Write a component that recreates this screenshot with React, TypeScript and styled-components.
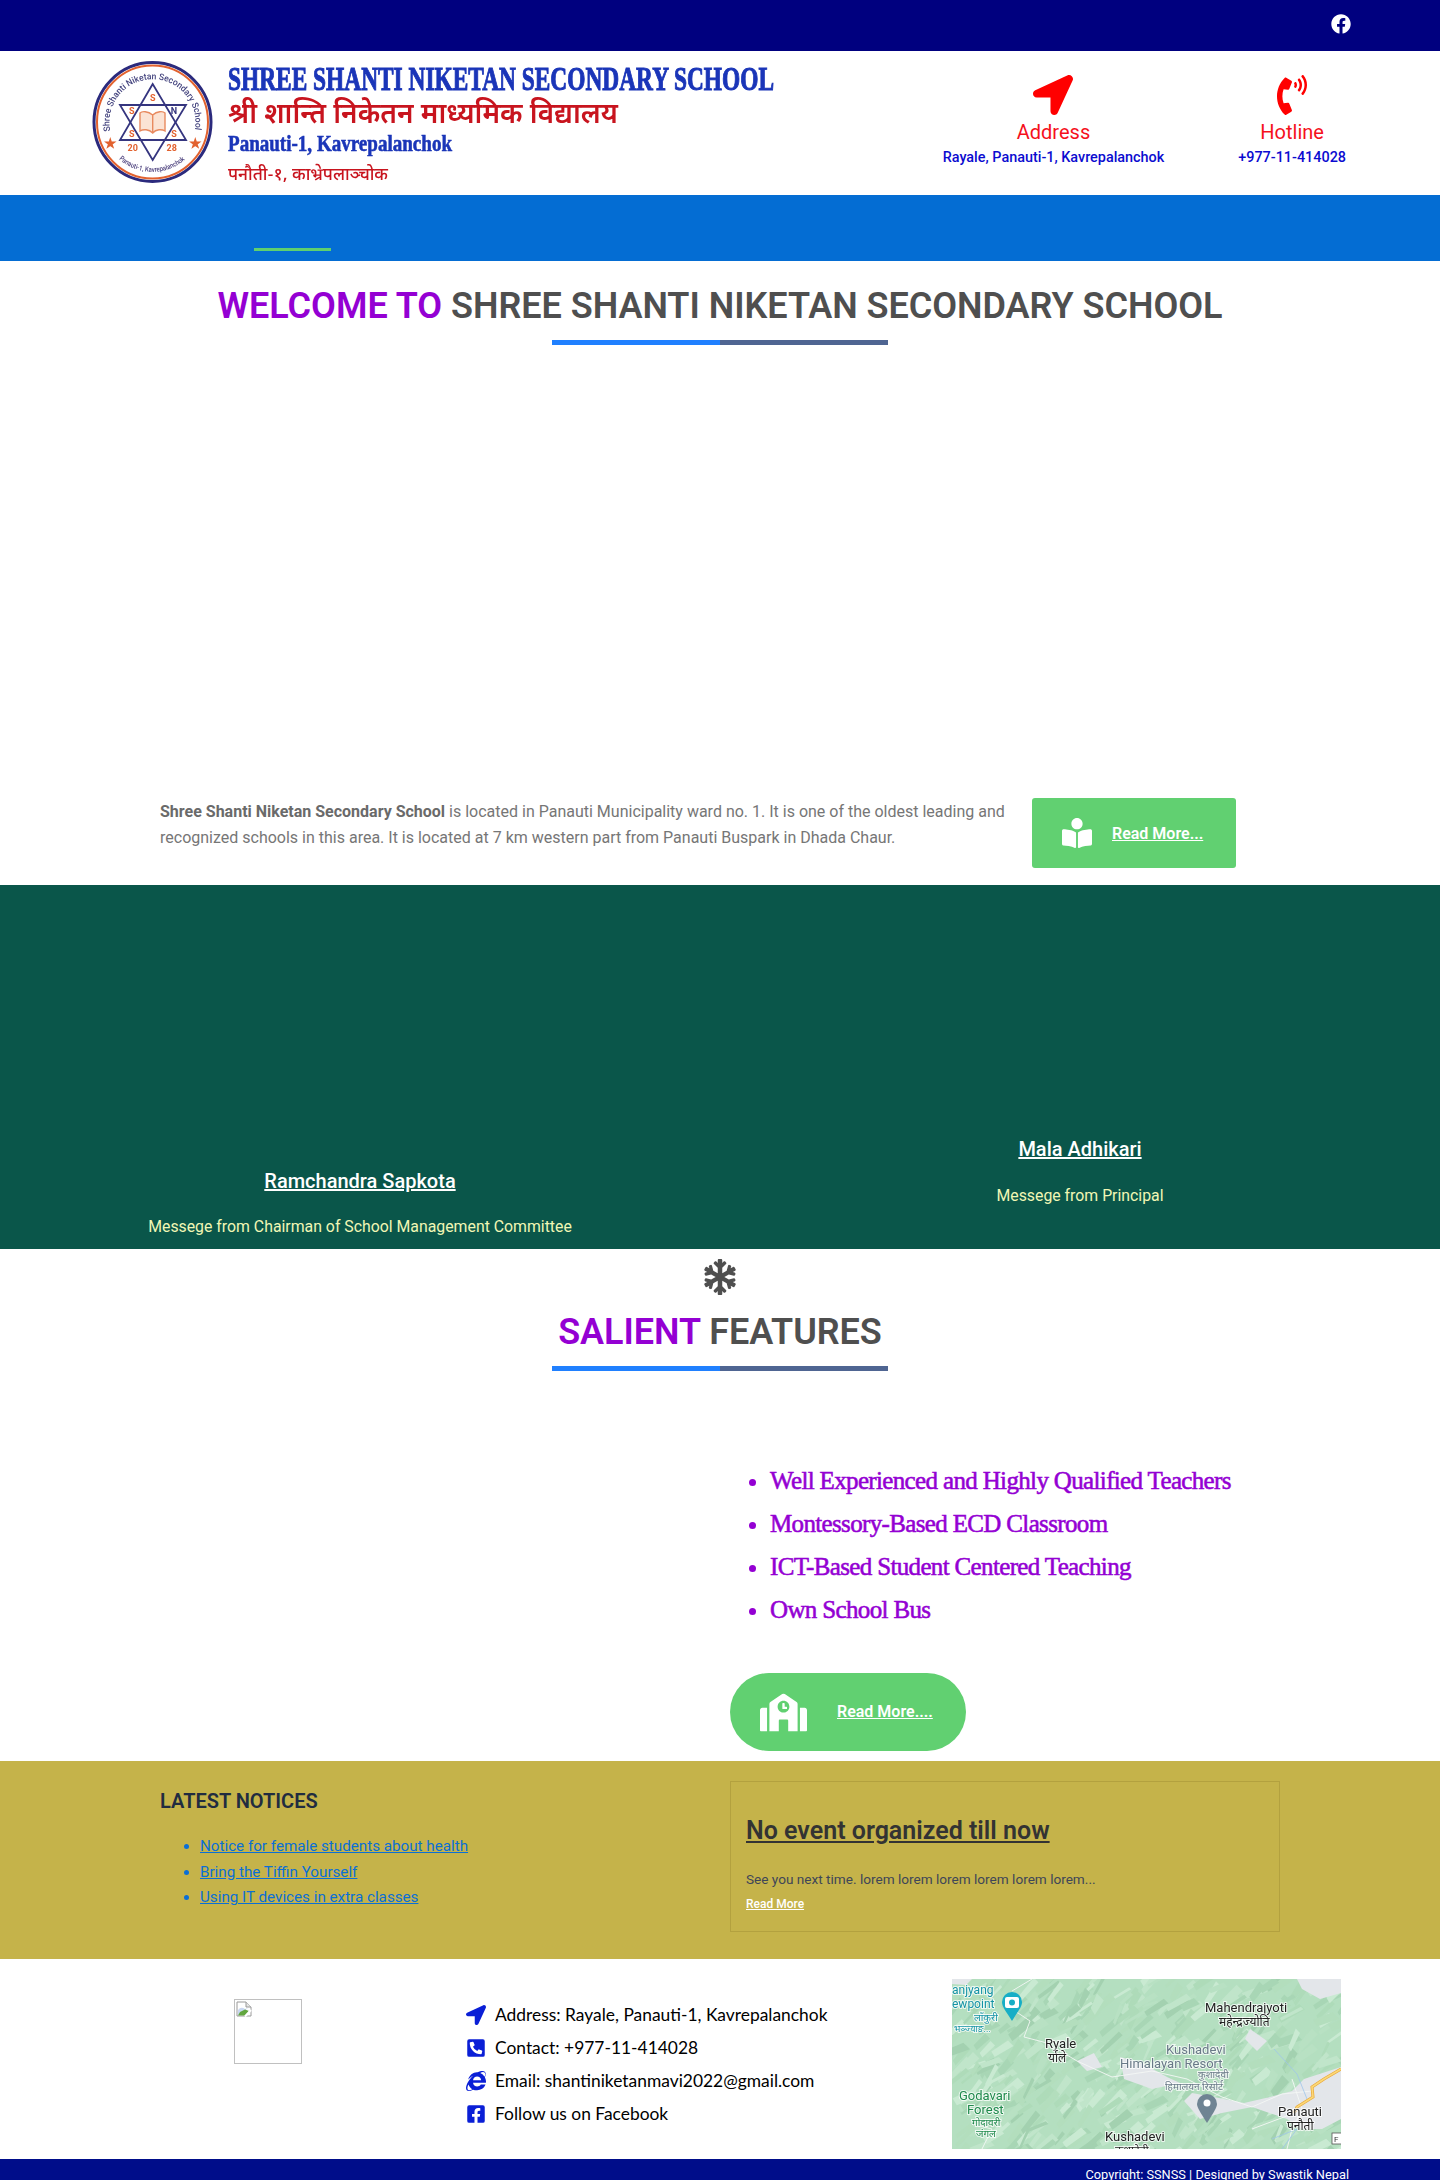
import React from "react";
import styled, { createGlobalStyle } from "styled-components";
import {
  FaBookReader,
  FaFacebook,
  FaFacebookSquare,
  FaInternetExplorer,
  FaLocationArrow,
  FaPhoneSquareAlt,
  FaPhoneVolume,
  FaSchool,
  FaSnowflake,
} from "react-icons/fa";

const GlobalStyle = createGlobalStyle`
  html, body {
    margin: 0;
    padding: 0;
    background: #fff;
  }
  body {
    font-family: Roboto, "Liberation Sans", sans-serif;
    font-size: 16px;
  }
  * {
    box-sizing: border-box;
  }
`;

const LOGO_SERIF = '"Liberation Serif", "Noto Sans CJK SC", serif';
const DEVANAGARI = '"Noto Sans Devanagari", "Noto Sans", "Liberation Serif", serif';

const Logo = () => (
  <LogoSvg viewBox="0 0 700 144" width="700" height="144">
    <defs>
      <path id="logoTopArc" d="M 30.4 80 A 43 43 0 1 1 114.6 80" />
      <path id="logoBottomArc" d="M 39 108 A 50 50 0 0 0 106 108" />
    </defs>
    <ellipse cx="72.5" cy="71" rx="58.5" ry="59.5" fill="#fff" stroke="#2b2a7d" strokeWidth="3" />
    <ellipse cx="72.5" cy="71" rx="55.5" ry="56.5" fill="none" stroke="#e2622f" strokeWidth="2" />
    <text fontFamily="Roboto, sans-serif" fontSize="9" fontWeight="500" fill="#45457f">
      <textPath href="#logoTopArc" textLength="151" lengthAdjust="spacingAndGlyphs">
        Shree Shanti Niketan Secondary School
      </textPath>
    </text>
    <text fontFamily="Roboto, sans-serif" fontSize="7" fontWeight="500" fill="#4a3f7c">
      <textPath href="#logoBottomArc" textLength="72" lengthAdjust="spacingAndGlyphs">
        Panauti-1, Kavrepalanchok
      </textPath>
    </text>
    <polygon points="72.7,33 40,89 106,89" fill="none" stroke="#35357f" strokeWidth="1.8" />
    <polygon points="72.7,109 40,54 106,54" fill="none" stroke="#35357f" strokeWidth="1.8" />
    <g fontFamily="Roboto, sans-serif" fontSize="9" fontWeight="700" fill="#e2622f" textAnchor="middle">
      <text x="72.7" y="50">S</text>
      <text x="51.7" y="63">S</text>
      <text x="94" y="63" fill="#35357f">N</text>
      <text x="51.7" y="86">S</text>
      <text x="94" y="86">S</text>
      <text x="52.7" y="100">20</text>
      <text x="91.7" y="100">28</text>
      <text x="30.7" y="97" fontSize="14">★</text>
      <text x="115.7" y="97" fontSize="14">★</text>
    </g>
    <path
      d="M 72.7 64 C 68 60 62 60 60 62 L 60 80 C 63 78 69 78 72.7 82 C 76 78 82 78 85 80 L 85 62 C 83 60 77 60 72.7 64 Z M 72.7 64 L 72.7 82"
      fill="#fbe3d4"
      stroke="#e88a5f"
      strokeWidth="1.4"
    />
    <text x="148" y="39" fontFamily={LOGO_SERIF} fontSize="33" fontWeight="700" fill="#1a35b8" stroke="#1a35b8" strokeWidth="1" textLength="546" lengthAdjust="spacingAndGlyphs">
      SHREE SHANTI NIKETAN SECONDARY SCHOOL
    </text>
    <text x="148" y="72" fontFamily={DEVANAGARI} fontSize="29" fontWeight="600" fill="#c8141e" textLength="390" lengthAdjust="spacingAndGlyphs">
      श्री शान्ति निकेतन माध्यमिक विद्यालय
    </text>
    <text x="148" y="100" fontFamily={LOGO_SERIF} fontSize="24" fontWeight="700" fill="#1a35b8" stroke="#1a35b8" strokeWidth="0.6" textLength="224" lengthAdjust="spacingAndGlyphs">
      Panauti-1, Kavrepalanchok
    </text>
    <text x="148" y="129" fontFamily={DEVANAGARI} fontSize="17" fontWeight="500" fill="#c8141e" textLength="160" lengthAdjust="spacingAndGlyphs">
      पनौती-१, काभ्रेपलाञ्चोक
    </text>
  </LogoSvg>
);

// cheap seeded random so the map texture stays the same on each render
const seeded = (start: number) => {
  let s = start;
  return () => {
    s = (s * 16807) % 2147483647;
    return s / 2147483647;
  };
};

const ridgeColours = ["#aedbb9", "#b8e1c3", "#a8d6b5", "#c0e5ca", "#a3d1b0", "#b3debd", "#c9ead2"];

// thin slanted slivers, running low-left to up-right like the terrain shading
const ridges = (() => {
  const rnd = seeded(4242);
  const out: { points: string; fill: string }[] = [];
  for (let i = 0; i < 520; i++) {
    const x = rnd() * 400 - 10;
    const y = rnd() * 180;
    const w = 6 + rnd() * 16;
    const h = 6 + rnd() * 14;
    const t = 2 + rnd() * 5;
    out.push({
      points: `${x},${y} ${x + w},${y - h} ${x + w + t},${y - h + t} ${x + t * 0.6},${y + t}`,
      fill: ridgeColours[Math.floor(rnd() * ridgeColours.length)],
    });
  }
  return out;
})();

const MapPicture = () => (
  <MapSvg viewBox="0 0 389 170" width="389" height="170">
    <rect width="389" height="170" fill="#b4dfc0" />
    {ridges.map((r, i) => (
      <polygon key={i} points={r.points} fill={r.fill} />
    ))}
    <g fill="#e3e6ea">
      <polygon points="345,0 389,0 389,14 368,20 350,10" />
      <polygon points="232,122 240,114 262,118 292,124 318,118 340,112 352,100 389,88 389,140 370,150 350,150 335,140 300,128 270,134 248,140" />
      <polygon points="125,82 142,74 150,88 135,92" />
      <polygon points="168,78 190,84 215,98 228,104 200,110 172,100" />
      <polygon points="298,50 315,62 305,72 293,60" />
      <polygon points="0,0 20,0 14,6 0,5" />
    </g>
    <g fill="none" stroke="#f4f7f5" strokeWidth="0.9">
      <path d="M 60 30 L 78 42 L 72 58 L 95 64 L 125 82 L 160 98 L 200 92 L 235 100 L 270 118 L 300 128 L 330 115 L 360 112" />
      <path d="M 340 100 L 350 130 L 340 150 L 335 170" />
      <path d="M 30 170 L 40 150 L 20 145 M 80 0 L 60 12 M 300 150 L 340 135" />
    </g>
    <path d="M 330 170 L 345 150 L 320 160 M 322 70 L 345 95 L 355 120" fill="none" stroke="#9ec5ea" strokeWidth="0.8" />
    <path d="M 389 90 L 372 100 L 360 108 L 361 118 L 345 128 L 342 134" fill="none" stroke="#e9a83a" strokeWidth="3" />
    <path d="M 389 90 L 372 100 L 360 108 L 361 118 L 345 128 L 342 134" fill="none" stroke="#fbd877" strokeWidth="1.6" />
    <path d="M 60 42 C 54 32 50 28 50 23 A 10 10 0 0 1 70 23 C 70 28 66 32 60 42 Z" fill="#17aec6" />
    <rect x="53" y="18" width="14" height="11" rx="2" fill="#fff" />
    <circle cx="60" cy="23.5" r="3" fill="#17aec6" />
    <path d="M 255 144 C 248 133 245 128 245 125 A 10 10 0 0 1 265 125 C 265 128 262 133 255 144 Z" fill="#6f8493" />
    <circle cx="255" cy="124" r="3.5" fill="#fff" />
    <MapLabels>
      <MapLabel x="0" y="15" fill="#1493a5" fontSize="12">anjyang</MapLabel>
      <MapLabel x="0" y="29" fill="#1493a5" fontSize="12">ewpoint</MapLabel>
      <MapLabel x="22" y="42" fill="#1493a5" fontSize="10">लाँकुरी</MapLabel>
      <MapLabel x="2" y="53" fill="#1493a5" fontSize="9">भञ्ज्याङ...</MapLabel>
      <MapLabel x="253" y="33" fill="#222" fontSize="13">Mahendrajyoti</MapLabel>
      <MapLabel x="267" y="47" fill="#222" fontSize="12">महेन्द्रज्योति</MapLabel>
      <MapLabel x="93" y="69" fill="#222" fontSize="13">Ryale</MapLabel>
      <MapLabel x="96" y="83" fill="#222" fontSize="12">र्याले</MapLabel>
      <MapLabel x="214" y="75" fill="#687987" fontSize="13">Kushadevi</MapLabel>
      <MapLabel x="168" y="89" fill="#687987" fontSize="13">Himalayan Resort</MapLabel>
      <MapLabel x="246" y="99" fill="#687987" fontSize="10">कुशादेवी</MapLabel>
      <MapLabel x="213" y="111" fill="#687987" fontSize="10">हिमालयन रिसोर्ट</MapLabel>
      <MapLabel x="7" y="121" fill="#1f8a4c" fontSize="13">Godavari</MapLabel>
      <MapLabel x="15" y="135" fill="#1f8a4c" fontSize="13">Forest</MapLabel>
      <MapLabel x="20" y="147" fill="#1f8a4c" fontSize="10">गोदावरी</MapLabel>
      <MapLabel x="24" y="158" fill="#1f8a4c" fontSize="10">जंगल</MapLabel>
      <MapLabel x="153" y="162" fill="#222" fontSize="13">Kushadevi</MapLabel>
      <MapLabel x="163" y="175" fill="#222" fontSize="11">कुशादेवी</MapLabel>
      <MapLabel x="326" y="137" fill="#222" fontSize="13">Panauti</MapLabel>
      <MapLabel x="335" y="151" fill="#222" fontSize="12">पनौती</MapLabel>
    </MapLabels>
    <rect x="380" y="154" width="12" height="11" fill="#fff" stroke="#555" strokeWidth="0.8" />
    <text x="382" y="163" fontSize="8" fontFamily="Roboto, sans-serif" fill="#333">F</text>
  </MapSvg>
);

const BrokenImageIcon = () => (
  <svg viewBox="0 0 16 16" width="16" height="16">
    <path d="M1 1 H10 L15 6 V15 H1 Z" fill="#fff" stroke="#9a9a9a" strokeWidth="1" />
    <path d="M10 1 V6 H15" fill="#e6e6e6" stroke="#9a9a9a" strokeWidth="1" />
    <path d="M2 9 Q5 5 9 8 L12 7 L3 14 H2 Z" fill="#c9d8f2" />
    <path d="M2 14.5 L4 11 L9 8.5 L13 10 L9 14.5 Z" fill="#62a63f" />
    <path d="M9 15.5 L15 9" stroke="#fff" strokeWidth="2" />
  </svg>
);

const App = () => {
  return (
    <Page>
      <GlobalStyle />
      <TopBar>
        <FaFacebook size={20} />
      </TopBar>
      <Header>
        <Logo />
        <Contacts>
          <ContactItem>
            <FaLocationArrow size={40} />
            <ContactTitle>Address</ContactTitle>
            <ContactText>Rayale, Panauti-1, Kavrepalanchok</ContactText>
          </ContactItem>
          <ContactItem>
            <FaPhoneVolume size={40} />
            <ContactTitle>Hotline</ContactTitle>
            <ContactText>+977-11-414028</ContactText>
          </ContactItem>
        </Contacts>
      </Header>
      <NavBar>
        <NavIndicator />
      </NavBar>

      <TitleBlock $top={24}>
        <SectionTitle>
          <Accent>WELCOME TO</Accent> SHREE SHANTI NIKETAN SECONDARY SCHOOL
        </SectionTitle>
        <TitleRule />
      </TitleBlock>
      <HeroGap />
      <IntroRow>
        <IntroText>
          <strong>Shree Shanti Niketan Secondary School</strong> is located in Panauti Municipality ward no. 1. It is one of
          the oldest leading and recognized schools in this area. It is located at 7 km western part from Panauti Buspark in
          Dhada Chaur.
        </IntroText>
        <ReadMoreBox href="#">
          <FaBookReader size={30} />
          <span>Read More...</span>
        </ReadMoreBox>
      </IntroRow>

      <Messages>
        <MessageCol $bottom={10} $gap={22}>
          <PersonName href="#">Ramchandra Sapkota</PersonName>
          <PersonRole>Messege from Chairman of School Management Committee</PersonRole>
        </MessageCol>
        <MessageCol $bottom={41} $gap={23}>
          <PersonName href="#">Mala Adhikari</PersonName>
          <PersonRole>Messege from Principal</PersonRole>
        </MessageCol>
      </Messages>

      <TitleBlock $top={10}>
        <SnowIcon />
        <SectionTitle>
          <Accent>SALIENT</Accent> FEATURES
        </SectionTitle>
        <TitleRule />
      </TitleBlock>
      <Features>
        <FeatureList>
          <li>Well Experienced and Highly Qualified Teachers</li>
          <li>Montessory-Based ECD Classroom</li>
          <li>ICT-Based Student Centered Teaching</li>
          <li>Own School Bus</li>
        </FeatureList>
        <ReadMorePill href="#">
          <FaSchool size={47} />
          <span>Read More....</span>
        </ReadMorePill>
      </Features>

      <NoticeBand>
        <NoticeCol>
          <NoticeHeading>LATEST NOTICES</NoticeHeading>
          <NoticeList>
            <li><a href="#">Notice for female students about health</a></li>
            <li><a href="#">Bring the Tiffin Yourself</a></li>
            <li><a href="#">Using IT devices in extra classes</a></li>
          </NoticeList>
        </NoticeCol>
        <EventCard>
          <EventTitle href="#">No event organized till now</EventTitle>
          <EventText>See you next time. lorem lorem lorem lorem lorem lorem...</EventText>
          <EventLink href="#">Read More</EventLink>
        </EventCard>
      </NoticeBand>

      <Footer>
        <BrokenImage>
          <BrokenImageIcon />
        </BrokenImage>
        <FooterList>
          <FooterRow><FaLocationArrow size={20} /><span>Address: Rayale, Panauti-1, Kavrepalanchok</span></FooterRow>
          <FooterRow><FaPhoneSquareAlt size={20} /><span>Contact: +977-11-414028</span></FooterRow>
          <FooterRow><FaInternetExplorer size={20} /><span>Email: shantiniketanmavi2022@gmail.com</span></FooterRow>
          <FooterRow><FaFacebookSquare size={20} /><span>Follow us on Facebook</span></FooterRow>
        </FooterList>
        <MapPicture />
      </Footer>
      <CopyBar>Copyright: SSNSS | Designed by Swastik Nepal</CopyBar>
    </Page>
  );
};

export default App;

const Page = styled.div`
  width: 1440px;
  height: 2180px;
  overflow: hidden;
`;

const TopBar = styled.div`
  height: 51px;
  background-color: #00007f;
  color: #fff;
  display: flex;
  justify-content: flex-end;
  align-items: flex-start;
  padding: 14px 89px 0 0;
`;

const Header = styled.header`
  height: 144px;
  background-color: #fff;
  display: flex;
  padding-left: 80px;
`;

const LogoSvg = styled.svg`
  flex: none;
  filter: blur(0.4px);
`;

const Contacts = styled.div`
  margin-left: auto;
  display: flex;
  gap: 74px;
  padding: 24px 94px 0 0;
`;

const ContactItem = styled.div`
  display: flex;
  flex-direction: column;
  align-items: center;
  color: #ff0000;
`;

const ContactTitle = styled.div`
  margin-top: 5px;
  font-size: 20px;
  line-height: 24px;
  color: #f5101c;
`;

const ContactText = styled.div`
  margin-top: 3px;
  font-size: 14.4px;
  font-weight: 500;
  line-height: 22px;
  color: #0b0bd0;
`;

const NavBar = styled.nav`
  height: 66px;
  background-color: #046dd3;
  display: flex;
  align-items: flex-end;
  padding: 0 0 10px 254px;
`;

const NavIndicator = styled.div`
  width: 77px;
  height: 3px;
  background-color: #5fd06f;
`;

const TitleBlock = styled.div<{ $top: number }>`
  display: flex;
  flex-direction: column;
  align-items: center;
  padding-top: ${(p) => p.$top}px;
`;

const SectionTitle = styled.h2`
  margin: 0;
  font-size: 36px;
  font-weight: 600;
  letter-spacing: -0.03px;
  line-height: 43px;
  color: #4f4f4f;
`;

const Accent = styled.span`
  color: #9400d3;
`;

const TitleRule = styled.div`
  width: 336px;
  height: 5px;
  margin-top: 12px;
  background: linear-gradient(to right, #2080ff 50%, #4f6592 50%);
`;

const SnowIcon = styled(FaSnowflake)`
  width: 36px;
  height: 36px;
  margin-bottom: 16px;
  color: #4f4f4f;
`;

const HeroGap = styled.div`
  height: 453px;
`;

const IntroRow = styled.section`
  display: flex;
  align-items: flex-start;
  padding: 0 0 17px 160px;
`;

const IntroText = styled.p`
  width: 872px;
  margin: 0;
  padding: 1px 20px 0 0;
  line-height: 25.6px;
  color: #767676;

  strong {
    font-weight: 700;
    color: #6a6a6a;
  }
`;

const ReadMoreBox = styled.a`
  width: 204px;
  height: 70px;
  display: flex;
  align-items: center;
  gap: 20px;
  padding-left: 30px;
  border-radius: 3px;
  background-color: #61d071;
  color: #fff;
  font-weight: 600;
  text-decoration: underline;
`;

const Messages = styled.section`
  height: 364px;
  display: grid;
  grid-template-columns: 1fr 1fr;
  background-color: #0a564a;
`;

const MessageCol = styled.div<{ $bottom: number; $gap: number }>`
  display: flex;
  flex-direction: column;
  justify-content: flex-end;
  align-items: center;
  gap: ${(p) => p.$gap}px;
  padding-bottom: ${(p) => p.$bottom}px;
`;

const PersonName = styled.a`
  font-size: 20px;
  font-weight: 500;
  line-height: 24px;
  color: #fff;
  text-decoration: underline;
`;

const PersonRole = styled.div`
  font-size: 15.84px;
  line-height: 24px;
  color: #f1f7b5;
`;

const Features = styled.section`
  height: 390px;
  padding: 88px 0 0 730px;
`;

const FeatureList = styled.ul`
  margin: 0 0 42px;
  padding: 0 0 0 40px;
  font-family: "Liberation Serif", serif;
  font-size: 25px;
  font-weight: 400;
  letter-spacing: -0.65px;
  line-height: 43px;
  color: #9400d3;
  -webkit-text-stroke: 0.55px #9400d3;
`;

const ReadMorePill = styled.a`
  width: 236px;
  height: 78px;
  display: flex;
  align-items: center;
  gap: 30px;
  padding-left: 30px;
  border-radius: 39px;
  background-color: #61d071;
  color: #fff;
  font-weight: 600;
  text-decoration: underline;

  span {
    margin-bottom: 2px;
  }
`;

const NoticeBand = styled.section`
  height: 198px;
  display: flex;
  padding: 20px 0 0 160px;
  background-color: #c5b34a;
`;

const NoticeCol = styled.div`
  width: 570px;
  padding-top: 8px;
`;

const NoticeHeading = styled.h4`
  margin: 0 0 21px;
  font-size: 20px;
  font-weight: 600;
  line-height: 24px;
  color: #212c40;
`;

const NoticeList = styled.ul`
  margin: 0;
  padding-left: 40px;
  font-size: 15.2px;
  line-height: 25.6px;
  color: #0a6fd6;

  a {
    color: inherit;
  }
`;

const EventCard = styled.div`
  width: 550px;
  height: 151px;
  display: flex;
  flex-direction: column;
  align-items: flex-start;
  padding: 34px 15px 0;
  border: 1px solid #b3a13f;
`;

const EventTitle = styled.a`
  font-size: 25px;
  font-weight: 600;
  line-height: 29px;
  color: #333;
  text-decoration: underline;
`;

const EventText = styled.p`
  margin: 24px 0 5px;
  font-size: 13.6px;
  line-height: 21px;
  color: #3e4658;
`;

const EventLink = styled.a`
  font-size: 12px;
  font-weight: 500;
  line-height: 18px;
  color: #fff;
  text-decoration: underline;
`;

const Footer = styled.footer`
  height: 200px;
  display: flex;
  align-items: flex-start;
  padding-left: 234px;
`;

const BrokenImage = styled.div`
  width: 68px;
  height: 65px;
  margin-top: 40px;
  padding: 1px;
  border: 1px solid #c0c0c0;
`;

const FooterList = styled.ul`
  width: 486px;
  margin: 39px 0 0 164px;
  padding: 0;
  list-style: none;
`;

const FooterRow = styled.li`
  height: 33px;
  display: flex;
  align-items: center;
  gap: 9px;
  font-family: Lato, sans-serif;
  font-size: 17.4px;
  color: #000;

  svg {
    color: #0a1fd6;
    flex: none;
  }
`;

const MapSvg = styled.svg`
  margin-top: 20px;
  flex: none;
  filter: blur(0.3px);
`;

const MapLabels = styled.g`
  font-family: Roboto, "Noto Sans", sans-serif;
`;

const MapLabel = styled.text`
  paint-order: stroke;
  stroke: rgba(255, 255, 255, 0.75);
  stroke-width: 2px;
`;

const CopyBar = styled.div`
  height: 21px;
  overflow: hidden;
  padding: 5px 91px 0 0;
  background-color: #000d8a;
  color: #fff;
  font-size: 12.8px;
  line-height: 21px;
  text-align: right;
`;
